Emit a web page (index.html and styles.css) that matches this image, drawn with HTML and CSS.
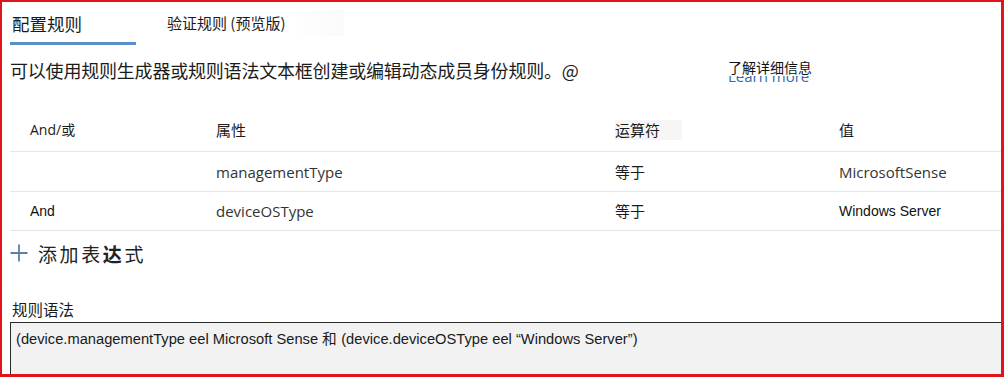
FILE: index.html
```html
<!DOCTYPE html>
<html lang="zh-CN">
<head>
<meta charset="utf-8">
<title>配置规则</title>
<link rel="stylesheet" href="styles.css">
</head>
<body>
<div class="frame">
  <div class="tabs">
    <div class="tab active">配置规则</div>
    <div class="tab second"><span class="tab-label">验证规则 (预览版)</span></div>
  </div>

  <div class="desc-row">
    <div class="desc">可以使用规则生成器或规则语法文本框创建或编辑动态成员身份规则。@</div>
    <div class="learn">
      <span class="learn-zh">了解详细信息</span>
      <span class="learn-clip"><span class="learn-en">Learn more</span></span>
    </div>
  </div>

  <div class="table">
    <div class="row head">
      <div class="cell c1">And/或</div>
      <div class="cell">属性</div>
      <div class="cell"><span class="shade">运算符</span></div>
      <div class="cell">值</div>
    </div>
    <div class="row r1">
      <div class="cell c1"></div>
      <div class="cell en">managementType</div>
      <div class="cell zh">等于</div>
      <div class="cell en">MicrosoftSense</div>
    </div>
    <div class="row r2">
      <div class="cell c1 arial">And</div>
      <div class="cell en">deviceOSType</div>
      <div class="cell zh">等于</div>
      <div class="cell arial">Windows Server</div>
    </div>
  </div>

  <div class="add">
    <svg class="plus" width="18" height="18" viewBox="0 0 18 18" aria-hidden="true">
      <path d="M9 0.5 V17.5 M0.5 9 H17.5" stroke="#5b7fa6" stroke-width="1.8" fill="none"/>
    </svg>
    <span class="add-text">添加表<b>达</b>式</span>
  </div>

  <div class="syntax-label">规则语法</div>
  <div class="syntax">(device.managementType eel Microsoft Sense 和 (device.deviceOSType eel “Windows Server”)</div>
</div>
</body>
</html>
```

FILE: styles.css
```css
html, body {
  margin: 0;
  padding: 0;
  background: #fff;
}

.frame {
  box-sizing: border-box;
  width: 1004px;
  height: 377px;
  border-style: solid;
  border-color: #e0141b;
  border-width: 2px 3px 3px 2px;
  padding-left: 8px;
  overflow: hidden;
  font-family: "Noto Sans CJK SC", "Open Sans", sans-serif;
  color: #1b1b1b;
}

.tabs {
  display: flex;
  align-items: flex-start;
  height: 43px;
}

.tab {
  font-size: 17.5px;
  line-height: 26px;
  padding-top: 9px;
}

.tab.active {
  width: 124px;
  padding-left: 2px;
  height: 31px;
  border-bottom: 3px solid #5b8fc8;
}

.tab.second {
  margin-left: 31px;
  font-size: 15px;
  padding-top: 8px;
}

.tab-label {
  display: inline-block;
  padding-right: 58px;
  background: linear-gradient(90deg, #fff 0%, #fff 70%, #fafafa 100%);
}

.desc-row {
  display: grid;
  grid-template-columns: 718px auto;
  margin-top: 12px;
  height: 26px;
}

.desc {
  font-size: 18px;
  line-height: 26px;
  letter-spacing: -0.2px;
}

.learn {
  display: flex;
  flex-direction: column;
  width: 90px;
  margin-top: 1px;
}

.learn-zh {
  display: block;
  font-size: 14px;
  line-height: 18px;
  color: #111;
}

.learn-clip {
  display: block;
  height: 7px;
  overflow: hidden;
}

.learn-en {
  display: block;
  margin-top: -9px;
  font-family: "Open Sans", sans-serif;
  font-size: 15px;
  line-height: 18px;
  color: #2f6ea9;
}

.table {
  margin-top: 25px;
}

.row {
  display: grid;
  grid-template-columns: 206px 399px 224px 1fr;
  align-items: center;
  border-bottom: 1px solid #e6e6e6;
}

.row.head {
  height: 43px;
  font-size: 15px;
}

.row.r1 {
  height: 39px;
}

.row.r2 {
  height: 38px;
}

.cell {
  line-height: 20px;
}

.c1 {
  padding-left: 20px;
  font-size: 14px;
}

.head .c1 {
  font-family: "Open Sans", "Noto Sans CJK SC", sans-serif;
  font-size: 14px;
}

.shade {
  display: inline-block;
  background: #f6f6f6;
  padding-right: 22px;
}

.en {
  font-family: "Open Sans", sans-serif;
  font-size: 15px;
  color: #333;
}

.zh {
  font-size: 15px;
}

.arial {
  font-family: "Liberation Sans", Arial, sans-serif;
  font-size: 14px;
  color: #111;
}

.add {
  display: flex;
  align-items: center;
  height: 44px;
  margin-top: 0;
}

.plus {
  display: block;
  flex: none;
}

.add-text {
  margin-left: 10px;
  font-size: 19px;
  letter-spacing: 2.6px;
  color: #222;
}

.add-text b {
  font-weight: 700;
}

.syntax-label {
  margin-top: 23px;
  font-size: 15.5px;
  line-height: 22px;
  padding-left: 2px;
}

.syntax {
  margin-top: 2px;
  height: 60px;
  border-top: 1px solid #2a2a2a;
  border-left: 1px solid #2a2a2a;
  background: #f2f2f3;
  font-family: "Liberation Sans", Arial, sans-serif;
  font-size: 14.7px;
  line-height: 20px;
  padding: 6px 0 0 5px;
  color: #1a1a1a;
}
```
